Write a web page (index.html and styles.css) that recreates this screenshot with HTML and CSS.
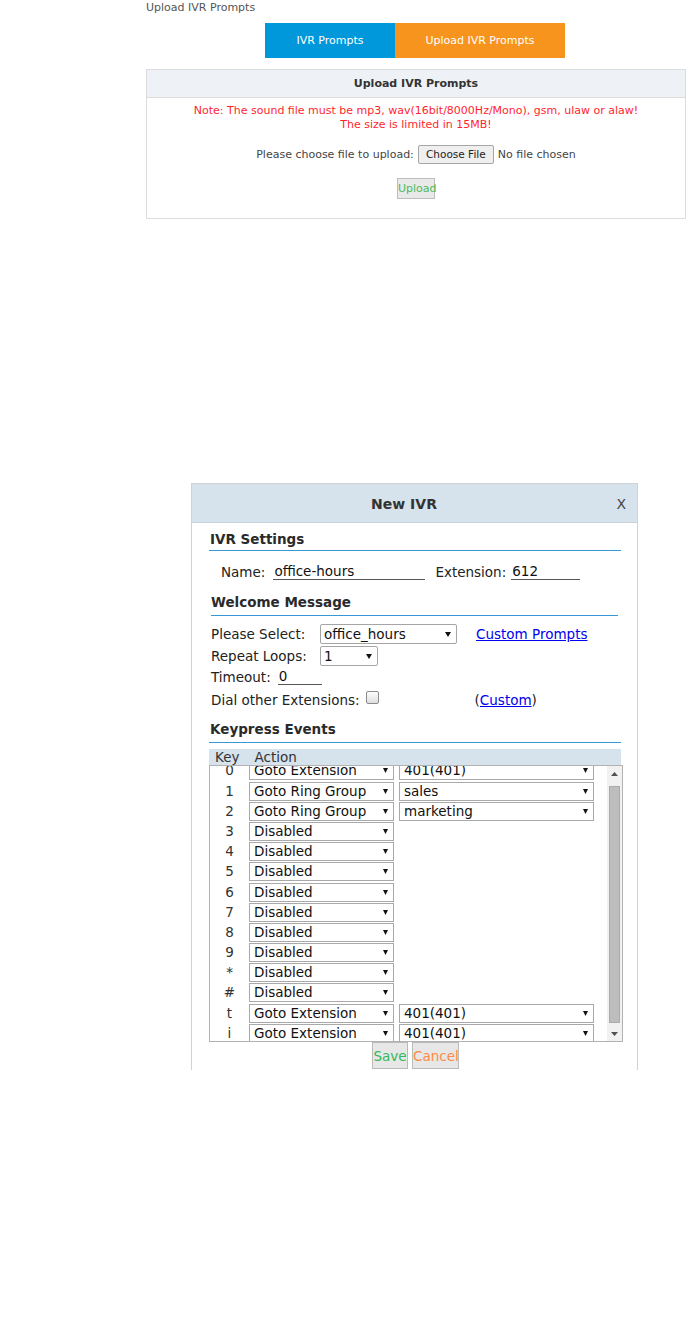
FILE: index.html
```html
<!DOCTYPE html>
<html>
<head>
<meta charset="utf-8">
<title>IVR</title>
<link rel="stylesheet" href="styles.css">
</head>
<body>
<section class="upload">
  <div class="crumb">Upload IVR Prompts</div>
  <div class="tabs">
    <div class="tab tab-blue">IVR Prompts</div>
    <div class="tab tab-orange">Upload IVR Prompts</div>
  </div>
  <div class="panel">
    <div class="panel-head">Upload IVR Prompts</div>
    <div class="panel-body">
      <div class="note">Note: The sound file must be mp3, wav(16bit/8000Hz/Mono), gsm, ulaw or alaw!<br>The size is limited in 15MB!</div>
      <div class="file-row">
        <span>Please choose file to upload:</span>
        <span class="btn-file">Choose File</span>
        <span>No file chosen</span>
      </div>
      <div class="upload-row"><span class="btn-upload">Upload</span></div>
    </div>
  </div>
</section>

<section class="dialog">
  <div class="dlg-head">
    <span></span>
    <span class="dlg-title">New IVR</span>
    <span class="dlg-close">X</span>
  </div>
  <div class="dlg-body">
    <div class="sec-title sec-ivr">IVR Settings</div>
    <div class="name-row">
      <span>Name:</span>
      <span class="line-input name-input">office-hours</span>
      <span class="ext-label">Extension:</span>
      <span class="line-input ext-input">612</span>
    </div>

    <div class="sec-title sec-welcome">Welcome Message</div>
    <div class="w-row w-row1">
      <span class="w-label">Please Select:</span>
      <span class="wsel wsel-prompt"><span>office_hours</span><svg class="warrow" width="6" height="5" viewBox="0 0 6 5"><polygon points="0,0 6,0 3,5" fill="#111"/></svg></span>
      <a class="link prompts-link">Custom Prompts</a>
    </div>
    <div class="w-row w-row2">
      <span class="w-label">Repeat Loops:</span>
      <span class="wsel wsel-loops"><span>1</span><svg class="warrow" width="6" height="5" viewBox="0 0 6 5"><polygon points="0,0 6,0 3,5" fill="#111"/></svg></span>
    </div>
    <div class="w-row w-row3">
      <span>Timeout:</span>
      <span class="line-input timeout-input">0</span>
    </div>
    <div class="w-row w-row4">
      <span>Dial other Extensions:</span>
      <span class="checkbox"></span>
      <span class="custom">(<a class="link">Custom</a>)</span>
    </div>

    <div class="sec-title sec-key">Keypress Events</div>
    <div class="kp-head"><span class="kp-key">Key</span><span class="kp-action">Action</span></div>
    <div class="kp-box">
      <div class="kp-view">
        <div class="kp-list">
          <div class="kp-row"><span class="k">0</span><span class="sel s1"><span>Goto Extension</span><svg width="5" height="5" viewBox="0 0 5 5"><polygon points="0,0 5,0 2.5,5" fill="#111"/></svg></span><span class="sel s2"><span>401(401)</span><svg width="5" height="5" viewBox="0 0 5 5"><polygon points="0,0 5,0 2.5,5" fill="#111"/></svg></span></div>
          <div class="kp-row"><span class="k">1</span><span class="sel s1"><span>Goto Ring Group</span><svg width="5" height="5" viewBox="0 0 5 5"><polygon points="0,0 5,0 2.5,5" fill="#111"/></svg></span><span class="sel s2"><span>sales</span><svg width="5" height="5" viewBox="0 0 5 5"><polygon points="0,0 5,0 2.5,5" fill="#111"/></svg></span></div>
          <div class="kp-row"><span class="k">2</span><span class="sel s1"><span>Goto Ring Group</span><svg width="5" height="5" viewBox="0 0 5 5"><polygon points="0,0 5,0 2.5,5" fill="#111"/></svg></span><span class="sel s2"><span>marketing</span><svg width="5" height="5" viewBox="0 0 5 5"><polygon points="0,0 5,0 2.5,5" fill="#111"/></svg></span></div>
          <div class="kp-row"><span class="k">3</span><span class="sel s1"><span>Disabled</span><svg width="5" height="5" viewBox="0 0 5 5"><polygon points="0,0 5,0 2.5,5" fill="#111"/></svg></span></div>
          <div class="kp-row"><span class="k">4</span><span class="sel s1"><span>Disabled</span><svg width="5" height="5" viewBox="0 0 5 5"><polygon points="0,0 5,0 2.5,5" fill="#111"/></svg></span></div>
          <div class="kp-row"><span class="k">5</span><span class="sel s1"><span>Disabled</span><svg width="5" height="5" viewBox="0 0 5 5"><polygon points="0,0 5,0 2.5,5" fill="#111"/></svg></span></div>
          <div class="kp-row"><span class="k">6</span><span class="sel s1"><span>Disabled</span><svg width="5" height="5" viewBox="0 0 5 5"><polygon points="0,0 5,0 2.5,5" fill="#111"/></svg></span></div>
          <div class="kp-row"><span class="k">7</span><span class="sel s1"><span>Disabled</span><svg width="5" height="5" viewBox="0 0 5 5"><polygon points="0,0 5,0 2.5,5" fill="#111"/></svg></span></div>
          <div class="kp-row"><span class="k">8</span><span class="sel s1"><span>Disabled</span><svg width="5" height="5" viewBox="0 0 5 5"><polygon points="0,0 5,0 2.5,5" fill="#111"/></svg></span></div>
          <div class="kp-row"><span class="k">9</span><span class="sel s1"><span>Disabled</span><svg width="5" height="5" viewBox="0 0 5 5"><polygon points="0,0 5,0 2.5,5" fill="#111"/></svg></span></div>
          <div class="kp-row"><span class="k">*</span><span class="sel s1"><span>Disabled</span><svg width="5" height="5" viewBox="0 0 5 5"><polygon points="0,0 5,0 2.5,5" fill="#111"/></svg></span></div>
          <div class="kp-row"><span class="k">#</span><span class="sel s1"><span>Disabled</span><svg width="5" height="5" viewBox="0 0 5 5"><polygon points="0,0 5,0 2.5,5" fill="#111"/></svg></span></div>
          <div class="kp-row"><span class="k">t</span><span class="sel s1"><span>Goto Extension</span><svg width="5" height="5" viewBox="0 0 5 5"><polygon points="0,0 5,0 2.5,5" fill="#111"/></svg></span><span class="sel s2"><span>401(401)</span><svg width="5" height="5" viewBox="0 0 5 5"><polygon points="0,0 5,0 2.5,5" fill="#111"/></svg></span></div>
          <div class="kp-row"><span class="k">i</span><span class="sel s1"><span>Goto Extension</span><svg width="5" height="5" viewBox="0 0 5 5"><polygon points="0,0 5,0 2.5,5" fill="#111"/></svg></span><span class="sel s2"><span>401(401)</span><svg width="5" height="5" viewBox="0 0 5 5"><polygon points="0,0 5,0 2.5,5" fill="#111"/></svg></span></div>
        </div>
      </div>
      <div class="sbar">
        <div class="sbtn"><svg width="7" height="4" viewBox="0 0 7 4"><polygon points="0,4 7,4 3.5,0" fill="#505050"/></svg></div>
        <div class="sthumb"></div>
        <div class="sbtn"><svg width="7" height="4" viewBox="0 0 7 4"><polygon points="0,0 7,0 3.5,4" fill="#505050"/></svg></div>
      </div>
    </div>
    <div class="dlg-actions">
      <span class="btn btn-save">Save</span>
      <span class="btn btn-cancel">Cancel</span>
    </div>
  </div>
</section>
</body>
</html>
```
FILE: styles.css
```css
* { box-sizing: border-box; }
body {
  margin: 0;
  background: #fff;
  font-family: "DejaVu Sans", Verdana, sans-serif;
  color: #333;
}

/* ---------- Upload section ---------- */
.upload {
  margin-left: 146px;
  width: 540px;
  font-size: 11px;
  color: #444;
}
.crumb { height: 14px; line-height: 15px; color: #555; }
.tabs { display: flex; justify-content: center; margin-top: 9px; padding-right: 2px; }
.tab { height: 35px; line-height: 35px; color: #fff; text-align: center; }
.tab-blue { width: 130px; background: #0098da; }
.tab-orange { width: 170px; background: #f7941d; }

.panel { margin-top: 11px; border: 1px solid #dcdcdc; }
.panel-head {
  height: 28px;
  line-height: 27px;
  background: #eef2f6;
  border-bottom: 1px solid #dcdcdc;
  text-align: center;
  font-weight: bold;
  color: #333;
}
.panel-body { padding: 6px 0 19px; text-align: center; }
.note { color: #ff1f2d; line-height: 14px; }
.file-row {
  margin-top: 13px;
  height: 19px;
  display: flex;
  justify-content: center;
  align-items: center;
  gap: 4px;
  color: #444;
}
.btn-file {
  width: 76px;
  height: 19px;
  line-height: 17px;
  border: 1px solid #a6a6a6;
  border-radius: 2px;
  background: #efefef;
  color: #222;
  font-size: 10.5px;
  text-align: center;
}
.upload-row { margin-top: 14px; height: 21px; display: flex; justify-content: center; }
.btn-upload {
  width: 38px;
  height: 21px;
  line-height: 20px;
  border: 1px solid #bdbdbd;
  background: #e9e9e9;
  color: #4cbc5a;
  font-size: 11px;
  text-align: center;
  white-space: nowrap;
}

/* ---------- Dialog ---------- */
.dialog {
  margin: 264px 0 0 191px;
  width: 447px;
  height: 587px;
  border: 1px solid #d2d2d2;
  border-bottom: none;
  font-size: 13.5px;
  color: #222;
}
.dlg-head {
  height: 39px;
  background: #d6e2ec;
  border-bottom: 1px solid #c9d3db;
  display: grid;
  grid-template-columns: 1fr auto 1fr;
  align-items: center;
  padding-right: 21px;
  padding-top: 1px;
}
.dlg-title { font-weight: bold; font-size: 14px; color: #333; }
.dlg-close { justify-self: end; font-size: 14px; color: #444; margin-right: -10px; }

.dlg-body { padding-left: 17px; }
.sec-title {
  font-weight: bold;
  line-height: 16px;
  color: #2a2a2a;
  border-bottom: 1px solid #3a97d6;
  padding-left: 1px;
}
.sec-ivr { width: 412px; margin-top: 8px; padding-bottom: 3px; }
.sec-welcome { width: 407px; margin-left: 2px; margin-top: 12px; padding-bottom: 5px; padding-left: 0; }
.sec-key { width: 412px; margin-top: 11px; padding-bottom: 5px; }

.name-row {
  margin-top: 11px;
  height: 20px;
  display: flex;
  align-items: center;
  padding-left: 12px;
}
.line-input {
  display: inline-block;
  line-height: 15px;
  height: 16px;
  border-bottom: 1px solid #555;
  padding-left: 1px;
  color: #111;
}
.name-input { width: 152px; margin-left: 8px; }
.ext-label { margin-left: 10px; }
.ext-input { width: 69px; margin-left: 5px; }

.w-row {
  height: 20px;
  display: flex;
  align-items: center;
  padding-left: 2px;
}
.w-row1 { margin-top: 8px; }
.w-row2 { margin-top: 2px; }
.w-row3 { margin-top: 1px; }
.w-row4 { margin-top: 3px; }
.w-label { width: 109px; }
.wsel {
  height: 20px;
  border: 1px solid #a5a5a5;
  border-radius: 2px;
  display: flex;
  align-items: center;
  justify-content: space-between;
  padding: 0 5px 0 3px;
  color: #111;
  white-space: nowrap;
}
.wsel-prompt { width: 137px; }
.wsel-loops { width: 58px; }
.link { color: #0000ee; text-decoration: underline; cursor: pointer; }
.prompts-link { margin-left: 19px; }
.timeout-input { width: 44px; margin-left: 7px; }
.checkbox {
  width: 13px;
  height: 13px;
  margin-left: 6px;
  align-self: flex-start;
  margin-top: 1px;
  border: 1px solid #8c8c8c;
  border-radius: 2px;
  background: linear-gradient(#fdfdfd, #dedede);
}
.custom { margin-left: 96px; }

.kp-head {
  margin-top: 6px;
  width: 412px;
  height: 16px;
  line-height: 16px;
  background: #d6e2ec;
  display: flex;
  color: #333;
}
.kp-key { padding-left: 6px; }
.kp-action { margin-left: 15px; }

.kp-box {
  width: 414px;
  height: 277px;
  border: 1px solid #b2b2b2;
  display: flex;
}
.kp-view { flex: 1; overflow: hidden; }
.kp-list { margin-top: -4.6px; }
.kp-row { height: 20.2px; display: flex; align-items: flex-start; }
.k { width: 39px; text-align: center; line-height: 19px; color: #333; }
.sel {
  height: 19px;
  border: 1px solid #a9a9a9;
  display: flex;
  align-items: center;
  justify-content: space-between;
  padding: 0 5px 0 4px;
  line-height: 17px;
  color: #111;
  white-space: nowrap;
  background: #fff;
}
.s1 { width: 145px; }
.s2 { width: 195px; margin-left: 5px; }

.sbar {
  width: 15px;
  background: #f1f1f1;
  display: flex;
  flex-direction: column;
}
.sbtn { height: 15px; display: flex; align-items: center; justify-content: center; }
.sthumb {
  flex: 1;
  margin: 5px 2px 3px;
  background: #bdbdbd;
  border: 1px solid #ababab;
}

.dlg-actions {
  width: 412px;
  display: flex;
  justify-content: center;
  gap: 4px;
  padding-left: 1px;
  margin-top: 0;
}
.btn {
  height: 27px;
  line-height: 26px;
  border: 1px solid #bababa;
  background: #e7e7e7;
  text-align: center;
  white-space: nowrap;
  font-size: 13.5px;
}
.btn-save { width: 36px; color: #34b85a; }
.btn-cancel { width: 47px; color: #ff8a45; }
```
